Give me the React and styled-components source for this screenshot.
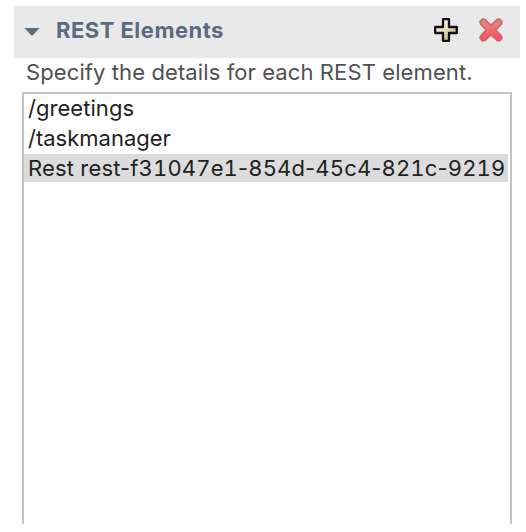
import React from "react";
import styled, { createGlobalStyle } from "styled-components";

const GlobalStyle = createGlobalStyle`
  * { box-sizing: border-box; }
  body { margin: 0; background: #fff; overflow: hidden; font-family: Inter, "Liberation Sans", sans-serif; }
`;

const Section = styled.section`
  width: 526px;
  height: 532px;
  padding: 6px 6px 8px 14px;
  display: flex;
  flex-direction: column;
  background: #fff;
`;

const Header = styled.header`
  display: flex;
  align-items: center;
  flex: none;
  width: 506px;
  height: 52px;
  padding: 0 16px 4px 10px;
  background: #e9e9e9;
`;

const Arrow = styled.svg`
  display: block;
  width: 16px;
  height: 8px;
  margin-top: 3px;
`;

const Title = styled.h1`
  flex: 1;
  margin: 0 0 0 16px;
  font-size: 22px;
  line-height: 28px;
  font-weight: 700;
  letter-spacing: 0.48px;
  color: #5b6b82;
`;

const Actions = styled.div`
  display: flex;
  gap: 19px;
`;

const IconButton = styled.button`
  width: 26px;
  height: 26px;
  padding: 0;
  border: 0;
  background: none;
  svg { display: block; }
`;

const Description = styled.p`
  flex: none;
  margin: 0 0 0 12px;
  height: 34px;
  font-size: 22px;
  line-height: 28px;
  white-space: nowrap;
  letter-spacing: 0.1px;
  color: #505050;
`;

const List = styled.ul`
  flex: 1;
  width: 490px;
  margin: 0 0 0 8px;
  padding: 0 2px 0 0;
  list-style: none;
  border: 2px solid #c4c4c4;
  border-bottom: 0;
  display: flex;
  flex-direction: column;
  gap: 2px;
`;

const Item = styled.li`
  height: 28px;
  padding-left: 4px;
  font-size: 22px;
  line-height: 28px;
  white-space: nowrap;
  color: #222;
  letter-spacing: ${(p) => p.$spacing};
  background: ${(p) => (p.$selected ? "#dcdcdc" : "transparent")};
`;

const Digits = styled.span`
  font-variant-numeric: tabular-nums;
`;

const elements = [
  { name: "/greetings", spacing: "0.05px" },
  { name: "/taskmanager", spacing: "0px" },
  { name: "Rest rest-f31047e1-854d-45c4-821c-9219", spacing: "0.14px", selected: true },
];

function AddIcon() {
  return (
    <svg width="26" height="26" viewBox="0 0 26 26">
      <defs>
        <linearGradient id="add" x1="0" y1="0" x2="1" y2="1">
          <stop offset="0.2" stopColor="#fbf8e8" />
          <stop offset="0.5" stopColor="#e4dabb" />
          <stop offset="0.9" stopColor="#bba666" />
        </linearGradient>
      </defs>
      <path d="M10 2.2h6v7.8h7.8v6H16v7.8h-6V16H2.200v-6H10z" fill="url(#add)" stroke="#111" strokeWidth="2.3" strokeLinejoin="round" />
    </svg>
  );
}

function DeleteIcon() {
  return (
    <svg width="26" height="26" viewBox="0 0 26 26">
      <defs>
        <linearGradient id="remove" x1="0" y1="0" x2="0" y2="1">
          <stop offset="0" stopColor="#dc8b84" />
          <stop offset="0.5" stopColor="#ee6c70" />
          <stop offset="1" stopColor="#f0505f" />
        </linearGradient>
      </defs>
      <path d="M2 4.500L4.500 2L7 2.500L13 8L19 2.500L21.500 2L24 4.500L23.500 7L18 13L23.500 19L24 21.500L21.500 24L19 23.500L13 18L7 23.500L4.500 24L2 21.500L2.500 19L8 13L2.500 7Z" fill="url(#remove)" stroke="#cd6666" strokeWidth="1.500" strokeLinejoin="round" />
    </svg>
  );
}

export default function App() {
  return (
    <>
      <GlobalStyle />
      <Section>
        <Header>
          <Arrow viewBox="0 0 16 8"><path d="M0.300 0H15.700L8 8Z" fill="#5b6b82" /></Arrow>
          <Title>REST Elements</Title>
          <Actions>
            <IconButton aria-label="Add"><AddIcon /></IconButton>
            <IconButton aria-label="Delete"><DeleteIcon /></IconButton>
          </Actions>
        </Header>
        <Description>Specify the details for each REST element.</Description>
        <List>
          {elements.map((e) => (
            <Item key={e.name} $selected={e.selected} $spacing={e.spacing}>
              {e.name.split(/(\d+)/).map((part, i) => (i % 2 ? <Digits key={i}>{part}</Digits> : part))}
            </Item>
          ))}
        </List>
      </Section>
    </>
  );
}
